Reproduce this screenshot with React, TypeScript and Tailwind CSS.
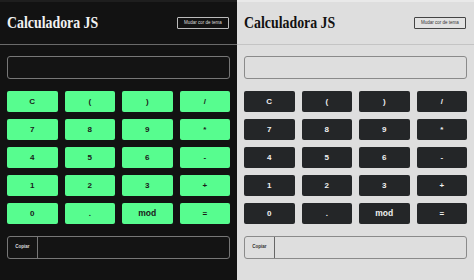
import React from 'react';

const keys = ['C', '(', ')', '/', '7', '8', '9', '*', '4', '5', '6', '-', '1', '2', '3', '+', '0', '.', 'mod', '='];

type Theme = 'dark' | 'light';

const CalcPanel: React.FC<{ theme: Theme }> = ({ theme }) => {
  const dark = theme === 'dark';
  return (
    <div className={`w-[237px] h-[280px] flex flex-col ${dark ? 'bg-[#121212]' : 'bg-[#dedede]'}`}>
      <div className={`h-[2px] ${dark ? 'bg-[#1e1e1e]' : 'bg-[#e9e9e9]'}`} />
      <header className={`h-[43px] flex items-center justify-between px-[7px] border-b ${dark ? 'border-[#6a6a6a]' : 'border-[#c4c4c4]'}`}>
        <h1
          className={`text-[16.5px] font-bold leading-none origin-left scale-x-[0.84] whitespace-nowrap ${dark ? 'text-[#f2f2f2]' : 'text-[#111]'}`}
          style={{ fontFamily: '"Liberation Serif", serif' }}
        >
          Calculadora JS
        </h1>
        <button
          className={`w-[52px] h-[12px] mr-[1px] text-[4.5px] leading-none border rounded-[1px] ${dark ? 'border-[#bbb] text-[#ddd] bg-[#121212]' : 'border-[#444] text-[#333] bg-[#e2e2e2]'}`}
          style={{ fontFamily: '"Liberation Sans", sans-serif' }}
        >
          Mudar cor de tema
        </button>
      </header>
      <div className="px-[7px] pt-[11px]" style={{ fontFamily: '"Liberation Sans", sans-serif' }}>
        <div className={`h-[23px] border rounded-[3px] ${dark ? 'border-[#777] bg-[#141414]' : 'border-[#8a8a8a] bg-[#dedede]'}`} />
        <div className="grid grid-cols-4 gap-[7px] mt-[12px]">
          {keys.map((k) => (
            <button
              key={k}
              className={`h-[21px] rounded-[2px] font-bold leading-none ${k === 'mod' ? 'text-[8.5px]' : 'text-[8px]'} ${dark ? 'bg-[#57fd8f] text-[#1a1a1a]' : 'bg-[#242628] text-[#f0f0f0]'}`}
            >
              {k}
            </button>
          ))}
        </div>
        <div className={`mt-[12px] h-[23px] flex border rounded-[3px] overflow-hidden ${dark ? 'border-[#777] bg-[#141414]' : 'border-[#8a8a8a] bg-[#dedede]'}`}>
          <button className={`w-[30px] text-[4.5px] font-bold border-r ${dark ? 'border-[#777] text-[#ddd]' : 'border-[#666] text-[#333]'}`}>
            Copiar
          </button>
          <div className="flex-1" />
        </div>
      </div>
    </div>
  );
};

export default function App() {
  return (
    <div className="w-[474px] h-[280px] flex overflow-hidden">
      <CalcPanel theme="dark" />
      <CalcPanel theme="light" />
    </div>
  );
}
